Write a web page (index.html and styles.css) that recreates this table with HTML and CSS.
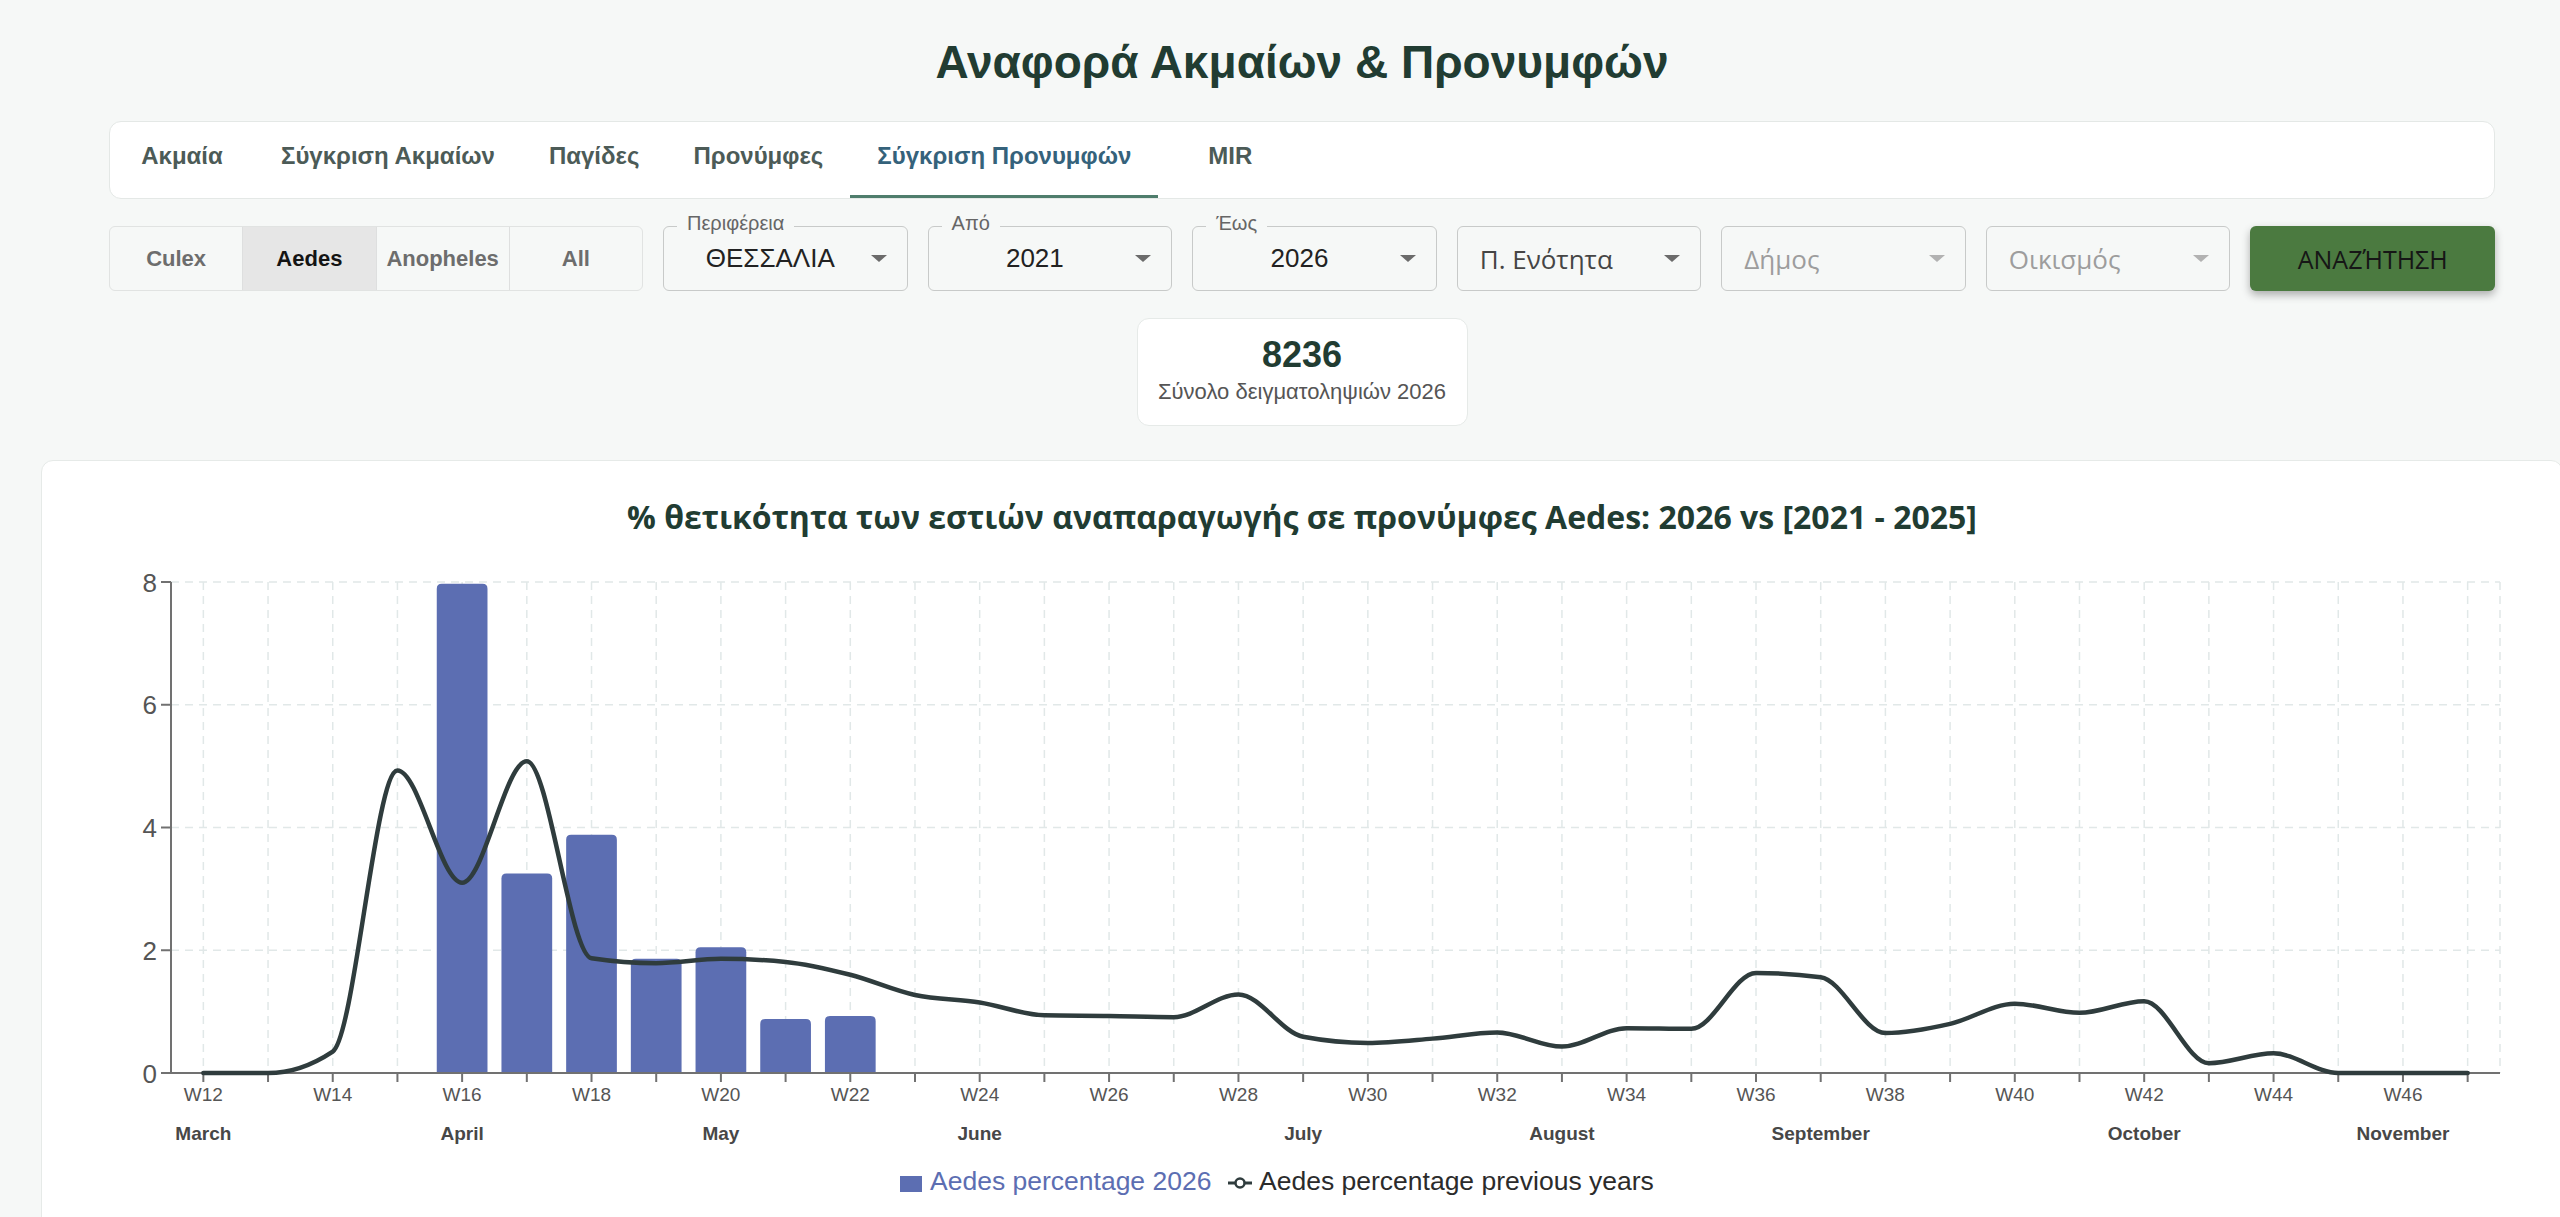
FILE: index.html
```html
<!DOCTYPE html>
<html lang="el">
<head>
<meta charset="utf-8">
<title>Αναφορά Ακμαίων &amp; Προνυμφών</title>
<link rel="stylesheet" href="styles.css">
</head>
<body>
<div class="page">
  <h1 class="page-title">Αναφορά Ακμαίων &amp; Προνυμφών</h1>
  <div class="container">
    <nav class="tabs">
      <a class="tab">Ακμαία</a>
      <a class="tab">Σύγκριση Ακμαίων</a>
      <a class="tab">Παγίδες</a>
      <a class="tab">Προνύμφες</a>
      <a class="tab tab-active">Σύγκριση Προνυμφών</a>
      <a class="tab">MIR</a>
    </nav>

    <div class="filters">
      <div class="segmented">
        <button class="seg">Culex</button>
        <button class="seg seg-active">Aedes</button>
        <button class="seg">Anopheles</button>
        <button class="seg">All</button>
      </div>
      <div class="select">
        <span class="select-label">Περιφέρεια</span>
        <span class="select-value">ΘΕΣΣΑΛΙΑ</span>
        <span class="caret"></span>
      </div>
      <div class="select">
        <span class="select-label">Από</span>
        <span class="select-value">2021</span>
        <span class="caret"></span>
      </div>
      <div class="select">
        <span class="select-label">Έως</span>
        <span class="select-value">2026</span>
        <span class="caret"></span>
      </div>
      <div class="select">
        <span class="select-placeholder">Π. Ενότητα</span>
        <span class="caret"></span>
      </div>
      <div class="select is-disabled">
        <span class="select-placeholder">Δήμος</span>
        <span class="caret"></span>
      </div>
      <div class="select is-disabled">
        <span class="select-placeholder">Οικισμός</span>
        <span class="caret"></span>
      </div>
      <button class="search-btn">ΑΝΑΖΉΤΗΣΗ</button>
    </div>

    <div class="stat-card">
      <div class="stat-value">8236</div>
      <div class="stat-label">Σύνολο δειγματοληψιών 2026</div>
    </div>
  </div>

  <section class="chart-card">
    <h2 class="chart-title">% θετικότητα των εστιών αναπαραγωγής σε προνύμφες Aedes: 2026 vs [2021 - 2025]</h2>
    <svg id="chart" class="chart" width="2520" height="700" xmlns="http://www.w3.org/2000/svg"></svg>
  </section>
</div>
<script src="chart.js"></script>
</body>
</html>
```

FILE: styles.css
```css
* { box-sizing: border-box; }
html, body { margin: 0; padding: 0; }
body {
  background: #f6f8f7;
  overflow: hidden;
  font-family: "Liberation Sans", Arial, sans-serif;
  color: #222;
}
.page { width: 2604px; padding-top: 35px; }
.page-title {
  margin: 0 0 32px;
  text-align: center;
  font-size: 46px;
  line-height: 54px;
  font-weight: 700;
  color: #213c32;
}
.container { width: 2386px; margin: 0 auto; }

/* tabs */
.tabs {
  display: flex;
  height: 78px;
  background: #fff;
  border: 1px solid #e4e8e6;
  border-radius: 12px;
}
.tab {
  display: flex;
  align-items: center;
  justify-content: center;
  min-width: 144px;
  height: 76px;
  padding: 0 27px 5px;
  border-bottom: 3px solid transparent;
  font-size: 24px;
  font-weight: 700;
  color: #4c5b57;
  text-decoration: none;
  white-space: nowrap;
}
.tab-active { color: #35627b; border-bottom-color: #4f7d6c; }

/* filters */
.filters {
  display: grid;
  grid-template-columns: 534px repeat(7, 1fr);
  gap: 20px;
  height: 65px;
  margin-top: 27px;
}
.segmented {
  display: flex;
  border: 1px solid #e1e3e2;
  border-radius: 6px;
  overflow: hidden;
}
.seg {
  flex: 1 1 0;
  border: 0;
  border-left: 1px solid #dedfdf;
  background: transparent;
  padding: 0;
  font: 700 22px "Liberation Sans", Arial, sans-serif;
  color: #6d6d6d;
}
.seg:first-child { border-left: 0; }
.seg-active { background: #e6e6e6; color: #141414; }

.select {
  position: relative;
  display: flex;
  align-items: center;
  gap: 8px;
  padding: 0 20px 0 14px;
  border: 1px solid #c8cac9;
  border-radius: 6px;
}
.select-label {
  position: absolute;
  top: -14px;
  left: 13px;
  padding: 0 10px;
  background: #f6f8f7;
  font-size: 20px;
  line-height: 20px;
  color: #666;
}
.select-value {
  flex: 1;
  text-align: center;
  font-size: 26px;
  color: #222;
}
.select-placeholder {
  flex: 1;
  padding-left: 8px;
  font-family: "Open Sans", "Liberation Sans", sans-serif;
  font-size: 26px;
  color: #454545;
}
.is-disabled .select-placeholder { color: #9d9d9d; }
.caret {
  flex: none;
  width: 0;
  height: 0;
  border-left: 8.5px solid transparent;
  border-right: 8.5px solid transparent;
  border-top: 7px solid #6b6b6b;
}
.is-disabled .caret { border-top-color: #b2b2b2; }
.search-btn {
  border: 0;
  border-radius: 6px;
  background: #4b7a40;
  box-shadow: 0 4px 8px rgba(0, 0, 0, 0.3);
  font: 400 25px "Open Sans", "Liberation Sans", sans-serif;
  color: #161616;
}

/* stat */
.stat-card {
  width: 331px;
  height: 108px;
  margin: 27px auto 0;
  background: #fff;
  border: 1px solid #e6eae8;
  border-radius: 12px;
  display: flex;
  flex-direction: column;
  align-items: center;
  padding-top: 16px;
}
.stat-value { font-size: 36px; line-height: 40px; font-weight: 700; color: #213c32; }
.stat-label { margin-top: 4px; font-size: 22px; line-height: 26px; color: #555; }

/* chart */
.chart-card {
  width: 2522px;
  height: 780px;
  margin: 34px auto 0;
  background: #fff;
  border: 1px solid #e6eae8;
  border-radius: 12px;
}
.chart-title {
  margin: 0;
  padding-top: 36px;
  text-align: center;
  font: 700 32px/40px "Open Sans", "Liberation Sans", sans-serif;
  color: #213c32;
}
.chart { display: block; }
.chart .grid { stroke: #e1e8e8; stroke-width: 1.5; stroke-dasharray: 8 6; }
.chart .axis { stroke: #717171; stroke-width: 2; fill: none; }
.chart .bar { fill: #5c6eb2; }
.chart .line { stroke: #2f3c3d; stroke-width: 4.5; fill: none; stroke-linejoin: round; stroke-linecap: round; }
.chart .ylab { font: 26px "Liberation Sans", Arial, sans-serif; fill: #555; }
.chart .xlab { font: 19px "Liberation Sans", Arial, sans-serif; fill: #555; }
.chart .mlab { font: 700 19px "Liberation Sans", Arial, sans-serif; fill: #474747; }
.chart .leg-bar { font: 26.5px "Liberation Sans", Arial, sans-serif; fill: #5c6eb2; }
.chart .leg-line { font: 26.5px "Liberation Sans", Arial, sans-serif; fill: #2b2b2b; }
.chart .leg-dot { fill: #fff; stroke: #2f3c3d; stroke-width: 2.5; }
.chart .leg-stroke { stroke: #2f3c3d; stroke-width: 3; }
```

FILE: chart.js
```js
(function () {
  var NS = 'http://www.w3.org/2000/svg';
  var svg = document.getElementById('chart');
  var top = Math.round(svg.getBoundingClientRect().top + window.scrollY);
  var left = Math.round(svg.getBoundingClientRect().left + window.scrollX);
  var g = document.createElementNS(NS, 'g');
  g.setAttribute('transform', 'translate(' + (-left) + ',' + (-top) + ')');
  svg.appendChild(g);

  function el(tag, attrs, text) {
    var e = document.createElementNS(NS, tag);
    for (var k in attrs) e.setAttribute(k, attrs[k]);
    if (text != null) e.textContent = text;
    g.appendChild(e);
    return e;
  }

  var X0 = 171, X1 = 2500, Y0 = 1073, Y8 = 582;
  var N = 36; // W12..W47
  var band = (X1 - X0) / N;
  var unit = (Y0 - Y8) / 8;
  function cx(i) { return X0 + (i + 0.5) * band; }
  function cy(v) { return Y0 - v * unit; }

  var line = [0, 0, 0.35, 4.93, 3.1, 5.08, 1.87, 1.79, 1.86, 1.81, 1.6, 1.27,
              1.15, 0.94, 0.93, 0.91, 1.28, 0.59, 0.49, 0.56, 0.66, 0.43, 0.73, 0.72,
              1.63, 1.56, 0.65, 0.8, 1.13, 0.98, 1.17, 0.16, 0.32, 0, 0, 0];
  var bars = {4: 7.97, 5: 3.25, 6: 3.88, 7: 1.86, 8: 2.05, 9: 0.88, 10: 0.93};

  var i, v;
  // grid
  for (v = 2; v <= 8; v += 2) el('line', {x1: X0, x2: X1, y1: cy(v), y2: cy(v), 'class': 'grid'});
  for (i = 0; i < N; i++) el('line', {x1: cx(i), x2: cx(i), y1: Y8, y2: Y0, 'class': 'grid'});
  el('line', {x1: X1, x2: X1, y1: Y8, y2: Y0, 'class': 'grid'});

  // bars
  var bw = band * 0.784, r = 5;
  for (var key in bars) {
    var idx = +key, val = bars[key];
    var x = cx(idx) - bw / 2, y = cy(val);
    var d = 'M' + x + ',' + Y0 + 'V' + (y + r) + 'Q' + x + ',' + y + ' ' + (x + r) + ',' + y +
            'H' + (x + bw - r) + 'Q' + (x + bw) + ',' + y + ' ' + (x + bw) + ',' + (y + r) +
            'V' + Y0 + 'Z';
    el('path', {d: d, 'class': 'bar'});
  }

  // axes
  el('line', {x1: X0, x2: X0, y1: Y8, y2: Y0, 'class': 'axis'});
  el('line', {x1: X0, x2: X1, y1: Y0, y2: Y0, 'class': 'axis'});
  for (v = 0; v <= 8; v += 2) {
    el('line', {x1: X0 - 10, x2: X0, y1: cy(v), y2: cy(v), 'class': 'axis'});
    el('text', {x: 157, y: cy(v) + 9.5, 'text-anchor': 'end', 'class': 'ylab'}, String(v));
  }
  for (i = 0; i < N; i++) {
    el('line', {x1: cx(i), x2: cx(i), y1: Y0, y2: Y0 + 9, 'class': 'axis'});
    if (i % 2 === 0) el('text', {x: cx(i), y: 1100.5, 'text-anchor': 'middle', 'class': 'xlab'}, 'W' + (12 + i));
  }
  var months = [[0, 'March'], [4, 'April'], [8, 'May'], [12, 'June'], [17, 'July'],
                [21, 'August'], [25, 'September'], [30, 'October'], [34, 'November']];
  months.forEach(function (m) {
    el('text', {x: cx(m[0]), y: 1139.5, 'text-anchor': 'middle', 'class': 'mlab'}, m[1]);
  });

  // monotone X line
  var n = line.length, h = band;
  var px = [], py = [];
  for (i = 0; i < n; i++) { px.push(cx(i)); py.push(cy(line[i])); }
  var s = [];
  for (i = 0; i < n - 1; i++) s.push((py[i + 1] - py[i]) / h);
  var t = [];
  for (i = 1; i < n - 1; i++) {
    var s0 = s[i - 1], s1 = s[i], p = (s0 + s1) / 2;
    t[i] = (Math.sign(s0) + Math.sign(s1)) * Math.min(Math.abs(s0), Math.abs(s1), 0.5 * Math.abs(p)) || 0;
  }
  t[0] = (3 * s[0] - t[1]) / 2;
  t[n - 1] = (3 * s[n - 2] - t[n - 2]) / 2;
  var path = 'M' + px[0] + ',' + py[0];
  for (i = 0; i < n - 1; i++) {
    path += 'C' + (px[i] + h / 3) + ',' + (py[i] + h * t[i] / 3) + ' ' +
            (px[i + 1] - h / 3) + ',' + (py[i + 1] - h * t[i + 1] / 3) + ' ' +
            px[i + 1] + ',' + py[i + 1];
  }
  el('path', {d: path, 'class': 'line'});

  // legend
  el('rect', {x: 900, y: 1176, width: 22, height: 16, 'class': 'bar'});
  el('text', {x: 930, y: 1190, 'class': 'leg-bar'}, 'Aedes percentage 2026');
  el('line', {x1: 1228, x2: 1252, y1: 1183, y2: 1183, 'class': 'leg-stroke'});
  el('circle', {cx: 1240, cy: 1183, r: 4.5, 'class': 'leg-dot'});
  el('text', {x: 1259, y: 1190, 'class': 'leg-line'}, 'Aedes percentage previous years');
})();
```
